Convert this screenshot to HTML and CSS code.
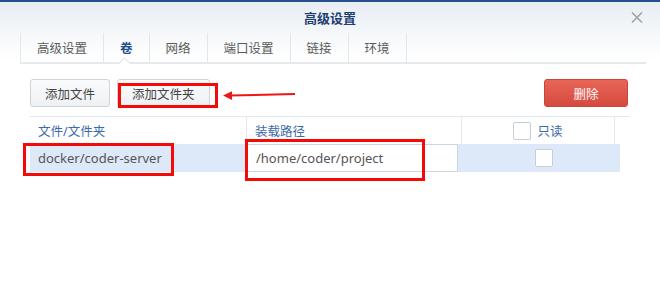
FILE: index.html
```html
<!DOCTYPE html>
<html lang="zh-CN">
<head>
    <meta charset="UTF-8">
    <title>高级设置</title>
    <link rel="stylesheet" href="styles.css">
</head>
<body>
    <div class="dialog">
        <!-- Title bar -->
        <div class="dialog-header">
            <div class="dialog-title">高级设置</div>
            <svg class="close-btn" width="12" height="11" viewBox="0 0 12 11">
                <path d="M1 0.5 L11 10.5 M11 0.5 L1 10.5" stroke="#a3a3a3" stroke-width="1.6" fill="none"/>
            </svg>
        </div>

        <!-- Tabs -->
        <div class="tabs">
            <div class="tab">高级设置</div>
            <div class="tab active">卷<span class="tab-caret"></span></div>
            <div class="tab">网络</div>
            <div class="tab">端口设置</div>
            <div class="tab">链接</div>
            <div class="tab">环境</div>
        </div>

        <!-- Toolbar -->
        <div class="toolbar">
            <div class="btn-group">
                <div class="btn">添加文件</div>
                <div class="btn">添加文件夹</div>
            </div>
            <div class="btn btn-danger">删除</div>
        </div>

        <!-- Volume table -->
        <div class="grid">
            <div class="grid-head">
                <div class="cell">文件/文件夹</div>
                <div class="cell">装载路径</div>
                <div class="cell cell-center"><span class="checkbox"></span>只读</div>
                <div class="cell"></div>
            </div>
            <div class="grid-row">
                <div class="cell row-text">docker/coder-server</div>
                <div class="cell cell-input"><div class="input">/home/coder/project</div></div>
                <div class="cell cell-center cell-check"><span class="checkbox"></span></div>
            </div>
        </div>

        <!-- Annotations drawn over the screenshot -->
        <div class="mark mark-folder"></div>
        <div class="mark mark-source"></div>
        <div class="mark mark-path"></div>
        <svg class="arrow" width="74" height="14" viewBox="0 0 74 14">
            <path d="M7 7.5 L72 6" stroke="#f01414" stroke-width="2" fill="none"/>
            <path d="M0 7.6 L9 3.2 L9 12 Z" fill="#f01414"/>
        </svg>
    </div>
</body>
</html>
```

FILE: styles.css
```css
* {
    margin: 0;
    padding: 0;
    box-sizing: border-box;
}

body {
    width: 660px;
    height: 305px;
    overflow: hidden;
    background-color: #fff;
    font-family: "Noto Sans", "Noto Sans CJK SC", sans-serif;
}

.dialog {
    position: relative;
    height: 305px;
    background: linear-gradient(#e7ecf2 0px, #f6f8fa 36px, #fff 60px);
}

.dialog-header {
    display: flex;
    justify-content: center;
    align-items: center;
    height: 32px;
    border-top: 2px solid #25508c;
    position: relative;
}

.dialog-title {
    font-size: 13px;
    font-weight: bold;
    color: #1d3f72;
}

.close-btn {
    position: absolute;
    right: 17px;
    top: 10px;
}

.tabs {
    display: flex;
    height: 32px;
    margin: 0 14px 0 20px;
    border-bottom: 2px solid #e6e8ec;
}

.tab {
    display: flex;
    align-items: center;
    padding: 0 16px;
    margin-top: 1px;
    font-size: 12.5px;
    color: #5a5a5a;
    border-left: 1px solid #e3e6ea;
    position: relative;
}

.tab:last-child {
    border-right: 1px solid #e3e6ea;
}

.tab.active {
    color: #1f4e91;
    font-weight: bold;
}

.tab-caret {
    position: absolute;
    left: 16px;
    bottom: -6px;
    width: 9px;
    height: 9px;
    background-color: #fff;
    border-left: 1px solid #dfe2e6;
    border-top: 1px solid #dfe2e6;
    transform: rotate(45deg);
}

.toolbar {
    display: flex;
    justify-content: space-between;
    padding: 0 32px 0 30px;
    margin-top: 15px;
}

.btn-group {
    display: flex;
    gap: 7px;
}

.btn {
    display: flex;
    align-items: center;
    justify-content: center;
    height: 28px;
    padding: 0 14px;
    font-size: 12.5px;
    color: #444;
    background: linear-gradient(#fafbfc, #eef1f4);
    border: 1px solid #cdd4dc;
    border-radius: 3px;
}

.btn-danger {
    width: 84px;
    color: #fff;
    background: linear-gradient(#e86659, #d44a3e);
    border-color: #c9463b;
}

.grid {
    margin: 9px 0 0 30px;
    width: 600px;
    font-size: 12.5px;
}

.grid-head {
    display: grid;
    grid-template-columns: 216px 215px 153px 16px;
    height: 28px;
    border-top: 1px solid #e3e8ef;
    color: #3b6aa8;
}

.grid-head .cell + .cell {
    border-left: 1px solid #e6eaf0;
}

.cell {
    display: flex;
    align-items: center;
    padding-left: 8px;
}

.cell-center {
    justify-content: center;
    padding-left: 0;
}

.grid-head .checkbox {
    margin-right: 6px;
}

.grid-row {
    display: grid;
    grid-template-columns: 216px 215px 159px;
    width: 590px;
    height: 28px;
    background-color: #dde9f8;
}

.row-text {
    font-size: 13px;
    color: #555;
}

.cell-input {
    padding: 0 3px 0 1px;
}

.input {
    display: flex;
    align-items: center;
    width: 100%;
    height: 28px;
    padding-left: 8px;
    font-size: 13px;
    color: #555;
    background-color: #fff;
    border: 1px solid #c9d5e3;
}

.cell-check {
    padding-left: 7px;
}

.checkbox {
    display: inline-block;
    width: 18px;
    height: 18px;
    background-color: #fff;
    border: 1px solid #c6ced8;
    border-radius: 2px;
}

.mark {
    position: absolute;
    border: 3px solid #f50a0a;
}

.mark-folder {
    left: 118px;
    top: 83px;
    width: 100px;
    height: 25px;
}

.mark-source {
    left: 23px;
    top: 143px;
    width: 151px;
    height: 33px;
}

.mark-path {
    left: 245px;
    top: 139px;
    width: 180px;
    height: 42px;
}

.arrow {
    position: absolute;
    left: 223px;
    top: 88px;
}
```
